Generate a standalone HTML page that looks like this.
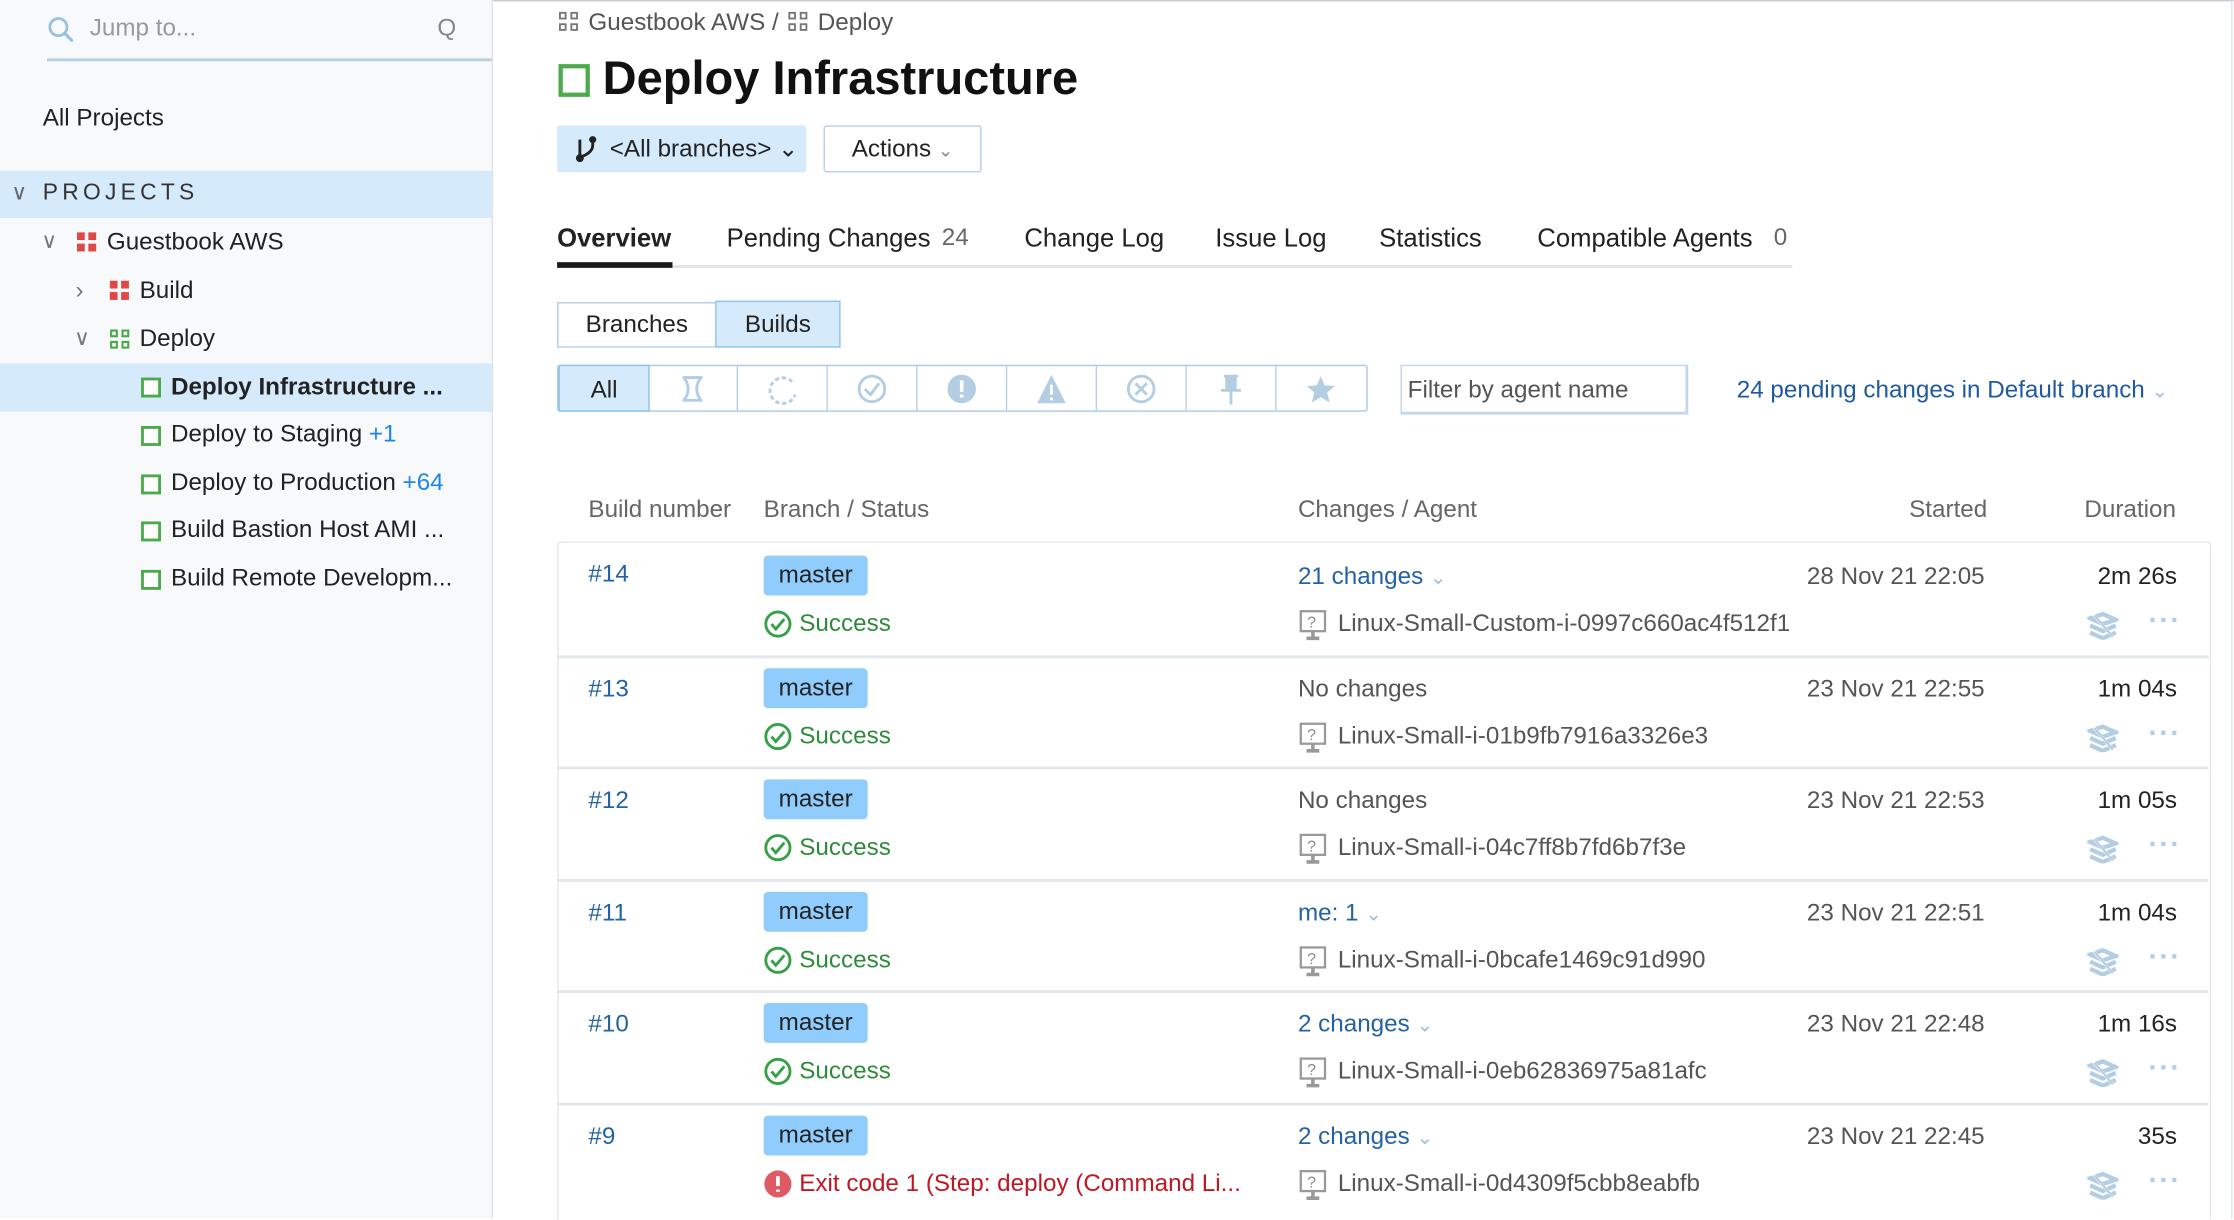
<!DOCTYPE html>
<html><head><meta charset="utf-8"><style>
html,body{margin:0;padding:0;width:2234px;height:1218px;overflow:hidden;background:#fff}
#w{position:absolute;left:0;top:0;width:1568px;height:855px;transform:scale(1.42474);transform-origin:0 0;font-family:"Liberation Sans",sans-serif;color:#222;font-size:17px}
.a{position:absolute;white-space:nowrap}
.sb{position:absolute;left:0;top:0;width:345px;height:855px;background:#f7f9fb;border-right:1px solid #dde3ea}
.sel{position:absolute;left:0;width:345px;height:34px;background:#d5ebfc}
.sq{position:absolute;width:10px;height:10px;border:2.5px solid #4caa4c;background:#fff}
.link{color:#2562a4}
.gray{color:#666}
.cell{position:absolute;top:257px;height:31px;width:62px;border-right:1px solid #b7cfe4}
.row{position:absolute;left:391px;width:1159px;height:78px;border-top:2px solid #e2e7ec}
.badge{position:absolute;left:145px;top:7px;width:73px;height:28px;border-radius:3px;background:#90cdfd;text-align:center;line-height:28px;font-size:17px}
</style></head><body><div id="w">
<div style="position:absolute;left:0;top:0;width:1568px;height:1px;background:#ccc"></div>
<div class="sb">
<svg class="a" style="left:33px;top:11px" width="20" height="20"><circle cx="8" cy="8" r="6" fill="none" stroke="#9cc0e0" stroke-width="2"/><line x1="12.5" y1="12.5" x2="18" y2="18" stroke="#9cc0e0" stroke-width="2.2"/></svg>
<div class="a" style="left:63px;top:10px;color:#999">Jump to...</div>
<div class="a" style="left:307px;top:10px;color:#888">Q</div>
<div class="a" style="left:33px;top:41px;width:312px;height:2px;background:#b8cde0"></div>
<div class="a" style="left:30px;top:73px">All Projects</div>
<div class="sel" style="top:120px;height:33px"></div>
<div class="a" style="left:8px;top:126px;color:#666;font-size:15px">&#8744;</div>
<div class="a" style="left:30px;top:127px;letter-spacing:3px;font-size:16px;color:#333">PROJECTS</div>
<div class="a" style="left:29px;top:160px;color:#777;font-size:15px">&#8744;</div>
<svg class="a" style="left:54px;top:163px" width="14" height="14"><rect x="0" y="0" width="5.5" height="5.5" fill="#e04848"/><rect x="8" y="0" width="5.5" height="5.5" fill="#e04848"/><rect x="0" y="8" width="5.5" height="5.5" fill="#e04848"/><rect x="8" y="8" width="5.5" height="5.5" fill="#e04848"/></svg>
<div class="a" style="left:75px;top:160px">Guestbook AWS</div>
<div class="a" style="left:53px;top:194px;color:#777">&#8250;</div>
<svg class="a" style="left:77px;top:197px" width="14" height="14"><rect x="0" y="0" width="5.5" height="5.5" fill="#e04848"/><rect x="8" y="0" width="5.5" height="5.5" fill="#e04848"/><rect x="0" y="8" width="5.5" height="5.5" fill="#e04848"/><rect x="8" y="8" width="5.5" height="5.5" fill="#e04848"/></svg>
<div class="a" style="left:98px;top:194px">Build</div>
<div class="a" style="left:52px;top:228px;color:#777;font-size:15px">&#8744;</div>
<svg class="a" style="left:77px;top:231px" width="14" height="14" fill="none" stroke="#4caa4c" stroke-width="1.5"><rect x="1" y="1" width="4" height="4"/><rect x="9" y="1" width="4" height="4"/><rect x="1" y="9" width="4" height="4"/><rect x="9" y="9" width="4" height="4"/></svg>
<div class="a" style="left:98px;top:228px">Deploy</div>
<div class="sel" style="top:255px"></div>
<div class="sq" style="left:99px;top:265px"></div><div class="a" style="left:120px;top:262px;font-weight:bold">Deploy Infrastructure ...</div>
<div class="sq" style="left:99px;top:299px"></div><div class="a" style="left:120px;top:295px">Deploy to Staging <span style="color:#1e88e5">+1</span></div>
<div class="sq" style="left:99px;top:333px"></div><div class="a" style="left:120px;top:329px">Deploy to Production <span style="color:#1e88e5">+64</span></div>
<div class="sq" style="left:99px;top:366px"></div><div class="a" style="left:120px;top:362px">Build Bastion Host AMI ...</div>
<div class="sq" style="left:99px;top:400px"></div><div class="a" style="left:120px;top:396px">Build Remote Developm...</div>
</div>
<div style="position:absolute;left:1566px;top:0;width:1px;height:855px;background:#dde3ea"></div>

<svg class="a" style="left:392px;top:8px" width="14" height="14" fill="none" stroke="#777" stroke-width="1.3"><rect x="1" y="1" width="4" height="4"/><rect x="9" y="1" width="4" height="4"/><rect x="1" y="9" width="4" height="4"/><rect x="9" y="9" width="4" height="4"/></svg>
<div class="a" style="left:413px;top:6px;color:#555">Guestbook AWS / </div>
<svg class="a" style="left:553px;top:8px" width="14" height="14" fill="none" stroke="#777" stroke-width="1.3"><rect x="1" y="1" width="4" height="4"/><rect x="9" y="1" width="4" height="4"/><rect x="1" y="9" width="4" height="4"/><rect x="9" y="9" width="4" height="4"/></svg>
<div class="a" style="left:574px;top:6px;color:#555">Deploy</div>
<div class="a" style="left:392px;top:45px;width:16px;height:17px;border:3px solid #4caa4c"></div>
<div class="a" style="left:423px;top:36px;font-size:33px;font-weight:bold;color:#111">Deploy Infrastructure</div>

<div class="a" style="left:391px;top:88px;width:175px;height:33px;background:#d5ebfc;border-radius:2px"></div>
<svg class="a" style="left:402px;top:95px" width="18" height="20" fill="none" stroke="#222" stroke-width="2"><path d="M5 3V16M14 3V7Q14 12 6 15"/><circle cx="5" cy="16" r="1.8" fill="#222"/><circle cx="14" cy="3" r="1.5" fill="#222"/></svg>
<div class="a" style="left:428px;top:95px">&lt;All branches&gt; &#8964;</div>
<div class="a" style="left:578px;top:88px;width:109px;height:31px;border:1px solid #b8cde0;border-radius:2px;text-align:center;line-height:31px">Actions <span style="color:#888;font-size:13px">&#8964;</span></div>

<div class="a" style="left:391px;top:186px;width:867px;height:2px;background:#e1e5e9"></div>
<div class="a" style="left:391px;top:184px;width:81px;height:4px;background:#1a1a1a"></div>
<div class="a" style="left:391px;top:157px;font-weight:bold;font-size:18px">Overview</div>
<div class="a" style="left:510px;top:157px;font-size:18px">Pending Changes</div><div class="a gray" style="left:661px;top:157px;font-size:17px">24</div>
<div class="a" style="left:719px;top:157px;font-size:18px">Change Log</div>
<div class="a" style="left:853px;top:157px;font-size:18px">Issue Log</div>
<div class="a" style="left:968px;top:157px;font-size:18px">Statistics</div>
<div class="a" style="left:1079px;top:157px;font-size:18px">Compatible Agents</div><div class="a gray" style="left:1245px;top:157px">0</div>

<div class="a" style="left:391px;top:212px;width:110px;height:30px;border:1px solid #b8cde0;border-right:none;text-align:center;line-height:30px">Branches</div>
<div class="a" style="left:502px;top:211px;width:86px;height:31px;border:1px solid #8cc4f0;background:#d5ebfc;text-align:center;line-height:31px">Builds</div>

<div class="a" style="left:391px;top:256px;width:567px;height:31px;border:1px solid #a9c8e2;border-radius:2px"></div>
<div class="cell" style="left:392px;background:#d5ebfc;border:1px solid #8cc4f0;top:256px;height:31px;text-align:center;line-height:33px;font-size:17px">All</div>
<div class="cell" style="left:455px"></div><div class="cell" style="left:518px"></div><div class="cell" style="left:581px"></div><div class="cell" style="left:644px"></div><div class="cell" style="left:707px"></div><div class="cell" style="left:770px"></div><div class="cell" style="left:833px"></div>
<svg class="a" style="left:455px;top:257px" width="504" height="32" fill="none" stroke="#b3cde3" stroke-width="2">
<path d="M24 8H38M24 24H38M25 8Q31 16 25 24M37 8Q31 16 37 24"/>
<path d="M101 11A9 9 0 1 0 103 20" stroke-dasharray="3 2"/>
<circle cx="157" cy="16" r="9"/><path d="M152 16l4 4 6-8"/>
<circle cx="220" cy="16" r="10" fill="#b3cde3" stroke="none"/><path d="M220 10v8M220 20v2" stroke="#fff" stroke-width="2.5"/>
<path d="M283 6L293 26H273Z" fill="#b3cde3" stroke="none"/><path d="M283 13v7M283 22v2" stroke="#fff" stroke-width="2"/>
<circle cx="346" cy="16" r="9"/><path d="M342 12l8 8M350 12l-8 8"/>
<path d="M404 7h10M406 7v8h6V7M402 17h14M409 17v10" fill="#b3cde3"/>
<path d="M472 7l2.8 6.5 7 .5-5.3 4.5 1.7 7-6.2-3.8-6.2 3.8 1.7-7-5.3-4.5 7-.5z" fill="#b3cde3" stroke="none"/>
</svg>
<div class="a" style="left:983px;top:256px;width:199px;height:32px;border:2px solid #c3d7ea;border-width:1px 2px 2px 1px"></div>
<div class="a" style="left:988px;top:264px;color:#555">Filter by agent name</div>
<div class="a" style="left:1219px;top:264px;color:#21599e">24 pending changes in Default branch <span style="color:#9cc0e0;font-size:14px">&#8964;</span></div>

<div class="a gray" style="left:413px;top:348px">Build number</div>
<div class="a gray" style="left:536px;top:348px">Branch / Status</div>
<div class="a gray" style="left:911px;top:348px">Changes / Agent</div>
<div class="a gray" style="left:1340px;top:348px">Started</div>
<div class="a gray" style="left:1463px;top:348px">Duration</div>

<div style="position:absolute;left:391px;top:380px;width:1159px;height:475px;border:1px solid #e2e7ec;border-bottom:none;border-radius:3px 3px 0 0"></div>
<div id="rows"></div>
<script>
var d=[["#14","21 changes",1,"Linux-Small-Custom-i-0997c660ac4f512f1","28 Nov 21 22:05","2m 26s",0],
["#13","No changes",0,"Linux-Small-i-01b9fb7916a3326e3","23 Nov 21 22:55","1m 04s",0],
["#12","No changes",0,"Linux-Small-i-04c7ff8b7fd6b7f3e","23 Nov 21 22:53","1m 05s",0],
["#11","me: 1",1,"Linux-Small-i-0bcafe1469c91d990","23 Nov 21 22:51","1m 04s",0],
["#10","2 changes",1,"Linux-Small-i-0eb62836975a81afc","23 Nov 21 22:48","1m 16s",0],
["#9","2 changes",1,"Linux-Small-i-0d4309f5cbb8eabfb","23 Nov 21 22:45","35s",1]];
var h="";
d.forEach(function(r,i){var t=381+i*78.6;
h+='<div class="row" style="top:'+(i?t:t+2)+'px;'+(i?'':'border-top:none')+'">'+
'<div class="a link" style="left:22px;top:'+(i?12:10)+'px">'+r[0]+'</div>'+
'<div class="badge">master</div>'+
(r[6]?'<svg class="a" style="left:145px;top:45px" width="20" height="20"><circle cx="10" cy="10" r="9.5" fill="#e05a64"/><path d="M10 4.5v7M10 14v1.5" stroke="#fff" stroke-width="2.6"/></svg><div class="a" style="left:170px;top:45px;color:#c01822">Exit code 1 (Step: deploy (Command Li...</div>'
:'<svg class="a" style="left:145px;top:45px" width="20" height="20" fill="none" stroke="#35a048" stroke-width="2"><circle cx="10" cy="10" r="8.5"/><path d="M5.5 10l3 3.5 6-7"/></svg><div class="a" style="left:170px;top:45px;color:#2e8b3a">Success</div>')+
'<div class="a '+(r[2]?'link':'gray')+'" style="left:520px;top:12px;'+(r[2]?'':'color:#555')+'">'+r[1]+(r[2]?' <span style="color:#9cc0e0;font-size:14px">&#8964;</span>':'')+'</div>'+
'<svg class="a" style="left:521px;top:45px" width="20" height="22" fill="none" stroke="#999" stroke-width="1.6"><rect x="1" y="1" width="17" height="14"/><path d="M9.5 15v4M5 20h9" stroke-width="2.5"/><text x="5.5" y="12.5" font-size="11" fill="#888" stroke="none" font-family="Liberation Sans">?</text></svg>'+
'<div class="a" style="left:548px;top:45px;color:#555">'+r[3]+'</div>'+
'<div class="a" style="right:157px;top:12px;color:#555">'+r[4]+'</div>'+
'<div class="a" style="right:22px;top:12px;color:#222">'+r[5]+'</div>'+
'<svg class="a" style="left:1074px;top:46px" width="22" height="20" fill="none" stroke="#b3cde3" stroke-width="3"><path d="M2 5l9-3 9 4-9 3zM2 10l9 4 9-4M2 15l9 4 9-4"/><path d="M4 2l14 16" stroke="#fff" stroke-width="2"/><path d="M5 3l13 15" stroke-width="1.5"/></svg>'+
'<div class="a" style="left:1117px;top:42px;color:#b3cde3;font-size:20px;letter-spacing:1px;font-weight:bold">&middot;&middot;&middot;</div>'+
'</div>';});
document.getElementById("rows").innerHTML=h;
</script>
</div></body></html>
